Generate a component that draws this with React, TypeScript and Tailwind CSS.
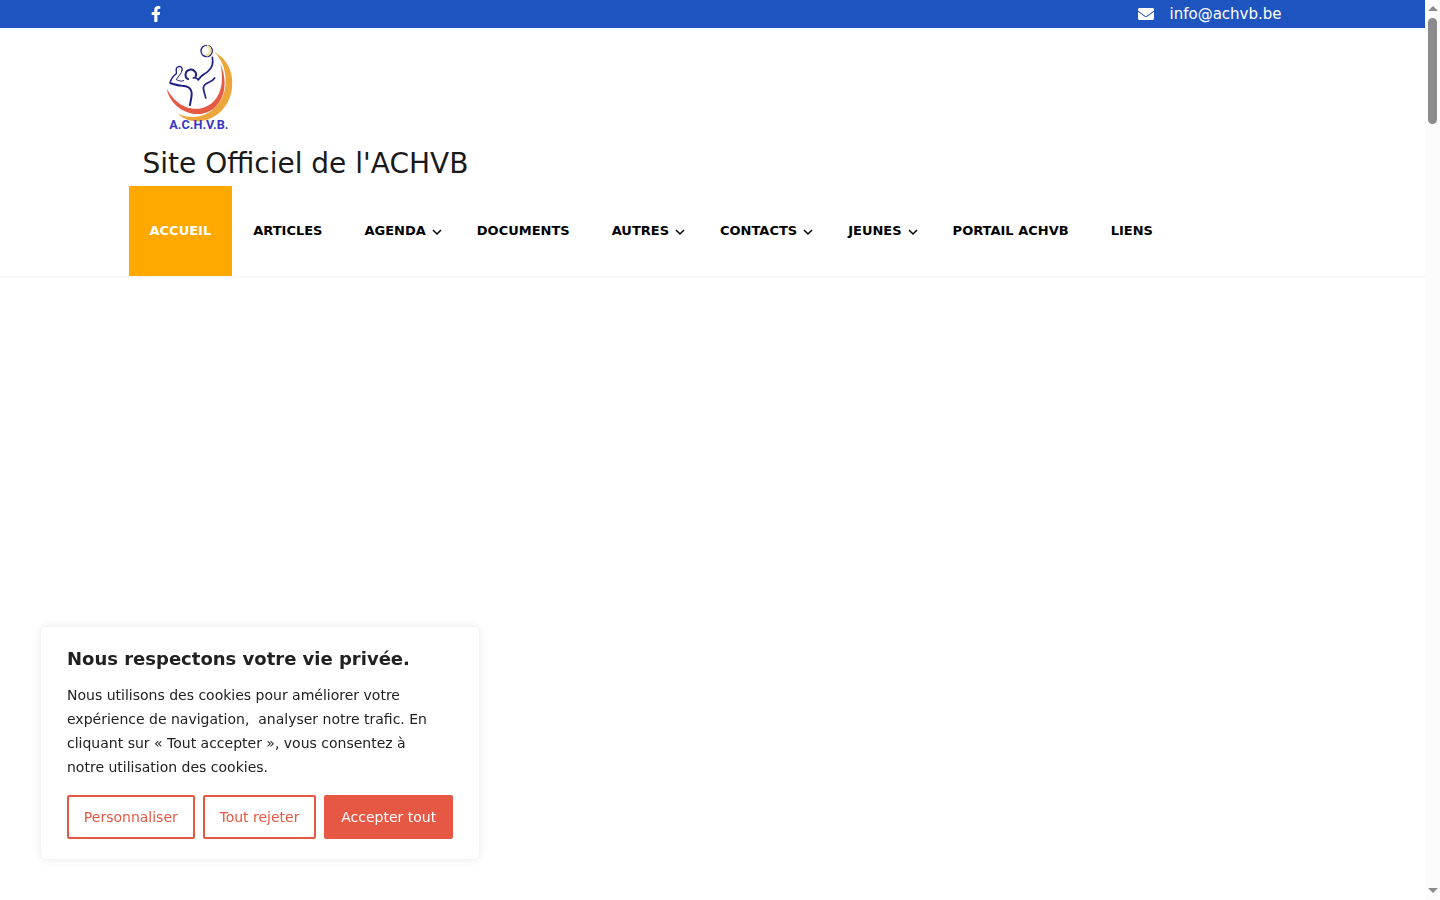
import { FaEnvelope, FaFacebookF } from 'react-icons/fa'

interface NavItem {
  label: string
  hasMenu?: boolean
  active?: boolean
}

const navItems: NavItem[] = [
  { label: 'Accueil', active: true },
  { label: 'Articles' },
  { label: 'Agenda', hasMenu: true },
  { label: 'Documents' },
  { label: 'Autres', hasMenu: true },
  { label: 'Contacts', hasMenu: true },
  { label: 'Jeunes', hasMenu: true },
  { label: 'Portail ACHVB' },
  { label: 'Liens' },
]

function Logo() {
  return (
    <svg viewBox="0 0 270 288" className="h-24 w-[90px]" role="img" aria-label="A.C.H.V.B.">
      <path
        d="M178 41C222 67 236 108 231 150C225 205 184 247 130 250C104 252 82 240 70 228C96 239 128 240 153 228C191 209 214 169 212 125C211 91 199 63 178 41Z"
        fill="#eda63c"
      />
      <path
        d="M196 78C218 128 211 178 181 207C158 230 119 235 88 219C60 205 41 181 35 152C53 184 78 205 107 211C140 218 174 202 190 170C203 145 204 112 196 78Z"
        fill="#e65a43"
      />
      <g fill="none" stroke="#20208a" strokeLinecap="round" strokeLinejoin="round">
        <circle cx="155" cy="39" r="17" strokeWidth="4" fill="#fff" />
        <path d="M158 25C170 31 168 46 156 52" stroke="#eee29a" strokeWidth="7" />
        <path d="M172 58C176 76 170 91 158 101C148 109 136 112 130 126C126 120 122 116 115 120" strokeWidth="5" />
        <path d="M99 123C88 118 89 98 104 95C118 93 127 106 122 115" strokeWidth="6" />
        <path d="M81 98C84 88 76 83 68 87C59 92 66 100 64 107C54 114 48 124 45 135" strokeWidth="4" />
        <path d="M81 98C80 107 70 113 64 125C72 128 78 132 86 128" strokeWidth="3" />
        <path d="M47 136C54 137 61 142 80 143C98 143 109 152 110 164C111 178 106 190 105 201" strokeWidth="6" />
        <path d="M179 120C170 135 149 133 146 146C142 156 151 168 152 180" strokeWidth="5" />
      </g>
      <text
        x="43"
        y="272"
        fontSize="38"
        className="fill-[#3535c9] font-[Roboto,sans-serif] font-bold"
      >
        A.C.H.V.B.
      </text>
    </svg>
  )
}

function Chevron() {
  return (
    <svg viewBox="0 0 10 10" className="size-[10px] fill-none stroke-current" aria-hidden="true">
      <path d="M1 4L5 8L9 4" strokeWidth="1.5" />
    </svg>
  )
}

function TopBar() {
  return (
    <div className="bg-[#1e54c0] text-white">
      <div className="mx-auto flex h-7 max-w-[1170px] items-center justify-between px-4">
        <a href="#facebook" aria-label="Facebook" className="px-1">
          <FaFacebookF className="size-4" />
        </a>
        <a href="mailto:info@achvb.be" className="flex items-center gap-4 text-[15px]">
          <FaEnvelope className="size-4" />
          info@achvb.be
        </a>
      </div>
    </div>
  )
}

function Header() {
  return (
    <header className="border-b-2 border-[#f7f7f7]">
      <div className="mx-auto max-w-[1170px]">
        <a href="#accueil" className="block px-[15px] pt-[10px] text-[#1a1a1a]">
          <span className="block pl-3">
            <Logo />
          </span>
          <span className="block h-[52px] pt-2 text-[28px] leading-[44px]">
            Site Officiel de l'ACHVB
          </span>
        </a>
        <nav aria-label="Menu principal" className="pl-px">
          <ul className="flex flex-wrap">
            {navItems.map((item) => (
              <li key={item.label}>
                <a
                  href={`#${item.label.toLowerCase()}`}
                  className={`flex h-[90px] items-center gap-[6px] pl-[21px] text-[13px] font-bold uppercase ${
                    item.hasMenu ? 'pr-[14px]' : 'pr-[21px]'
                  } ${item.active ? 'bg-[#ffa800] text-white' : 'text-black'}`}
                >
                  {item.label}
                  {item.hasMenu && <Chevron />}
                </a>
              </li>
            ))}
          </ul>
        </nav>
      </div>
    </header>
  )
}

function CookieNotice() {
  const button = 'h-11 grow rounded-xs border-2 border-[#e65843] px-[11px] text-[14px]'

  return (
    <section
      aria-labelledby="cookie-title"
      className="fixed bottom-10 left-10 w-[440px] rounded-md border border-[#f4f4f4] bg-white px-[26px] py-5 text-[#212121] shadow-[0_0_10px_rgba(0,0,0,0.08)]"
    >
      <h2 id="cookie-title" className="text-[18px] leading-6 font-bold">
        Nous respectons votre vie privée.
      </h2>
      <p className="mt-3 text-[14px] leading-6">
        Nous utilisons des cookies pour améliorer votre
        <br />
        expérience de navigation,&nbsp; analyser notre trafic. En
        <br />
        cliquant sur « Tout accepter », vous consentez à
        <br />
        notre utilisation des cookies.
      </p>
      <div className="mt-4 flex gap-2">
        <button type="button" className={`${button} text-[#e65843]`}>
          Personnaliser
        </button>
        <button type="button" className={`${button} text-[#e65843]`}>
          Tout rejeter
        </button>
        <button type="button" className={`${button} bg-[#e65843] text-white`}>
          Accepter tout
        </button>
      </div>
    </section>
  )
}

function ScrollRail() {
  return (
    <div
      aria-hidden="true"
      className="sticky top-0 flex h-screen w-[15px] flex-col items-center bg-[#fcfcfc] pt-[6px] pb-[7px]"
    >
      <svg viewBox="0 0 10 5" className="h-[5px] w-[10px] fill-[#8b8b8b]">
        <path d="M0 5L5 0L10 5Z" />
      </svg>
      <div className="mt-[7px] h-[106px] w-[9px] rounded-full bg-[#8b8b8b]" />
      <svg viewBox="0 0 10 5" className="mt-auto h-[5px] w-[10px] fill-[#8b8b8b]">
        <path d="M0 0L5 5L10 0Z" />
      </svg>
    </div>
  )
}

export default function App() {
  return (
    <div className="flex min-h-screen bg-white font-['DejaVu_Sans',sans-serif]">
      <div className="min-w-0 flex-1">
        <TopBar />
        <Header />
        <main />
      </div>
      <ScrollRail />
      <CookieNotice />
    </div>
  )
}
